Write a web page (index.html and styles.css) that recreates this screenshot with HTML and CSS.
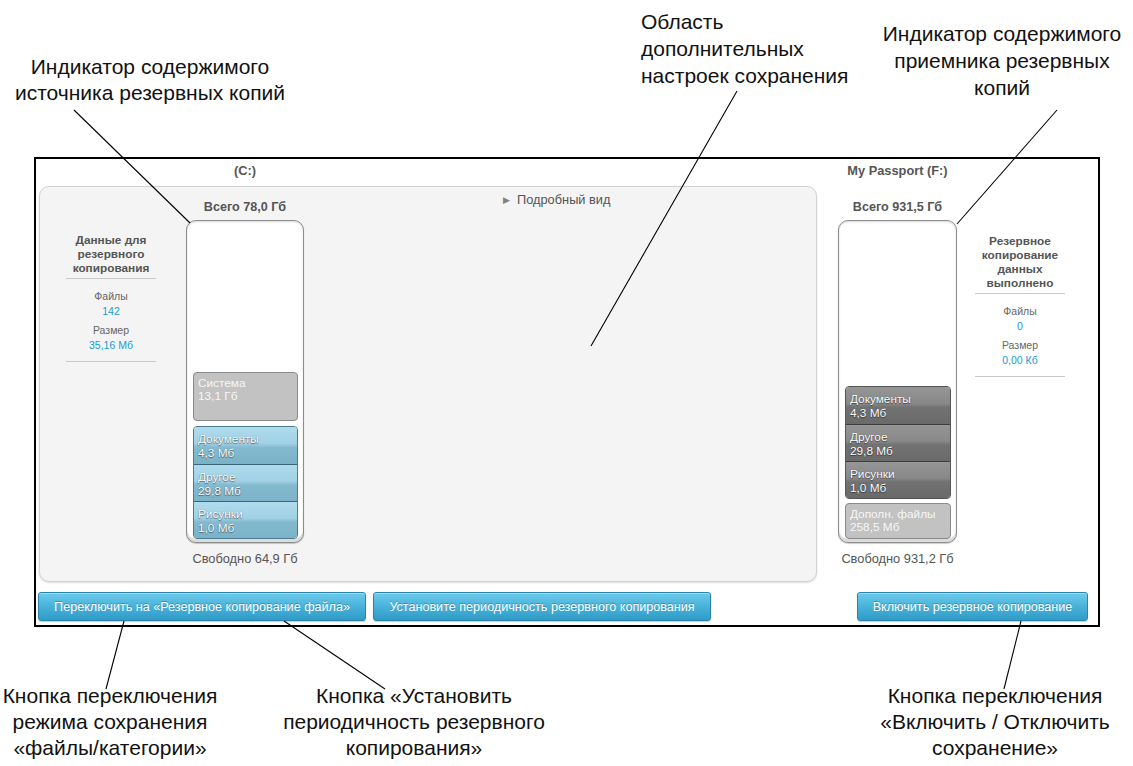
FILE: index.html
```html
<!DOCTYPE html>
<html lang="ru">
<head>
<meta charset="utf-8">
<title>Резервное копирование</title>
<link rel="stylesheet" href="styles.css">
</head>
<body>
<div class="figure">
  <div class="callout c-src">Индикатор содержимого<br>источника резервных копий</div>
  <div class="callout c-area">Область<br>дополнительных<br>настроек сохранения</div>
  <div class="callout c-dst">Индикатор содержимого<br>приемника резервных<br>копий</div>

  <div class="frame">
    <div class="heads">
      <div class="drive drive-src">(C:)</div>
      <div class="drive drive-dst">My Passport (F:)</div>
    </div>
    <div class="main">
      <div class="panel">
        <div class="info">
          <div class="info-title">Данные для<br>резервного<br>копирования</div>
          <div class="stats">
            <div class="stat-label">Файлы</div>
            <div class="stat-value">142</div>
            <div class="stat-label">Размер</div>
            <div class="stat-value">35,16 Мб</div>
          </div>
        </div>
        <div class="barcol">
          <div class="total">Всего 78,0 Гб</div>
          <div class="bar">
            <div class="seg seg-plain seg-sys">Система<br>13,1 Гб</div>
            <div class="group group-blue">
              <div class="seg">Документы<br>4,3 Мб</div>
              <div class="seg">Другое<br>29,8 Мб</div>
              <div class="seg">Рисунки<br>1,0 Мб</div>
            </div>
          </div>
          <div class="free">Свободно 64,9 Гб</div>
        </div>
        <div class="detail"><span class="tri">&#9654;</span>Подробный вид</div>
      </div>
      <div class="dest">
        <div class="barcol barcol-dst">
          <div class="total">Всего 931,5 Гб</div>
          <div class="bar">
            <div class="group group-dark">
              <div class="seg">Документы<br>4,3 Мб</div>
              <div class="seg">Другое<br>29,8 Мб</div>
              <div class="seg">Рисунки<br>1,0 Мб</div>
            </div>
            <div class="seg seg-plain seg-extra">Дополн. файлы<br>258,5 Мб</div>
          </div>
          <div class="free">Свободно 931,2 Гб</div>
        </div>
        <div class="info info-dst">
          <div class="info-title">Резервное<br>копирование<br>данных<br>выполнено</div>
          <div class="stats">
            <div class="stat-label">Файлы</div>
            <div class="stat-value">0</div>
            <div class="stat-label">Размер</div>
            <div class="stat-value">0,00 Кб</div>
          </div>
        </div>
      </div>
    </div>
    <div class="actions">
      <button class="btn btn-mode">Переключить на «Резервное копирование файла»</button>
      <button class="btn btn-sched">Установите периодичность резервного копирования</button>
      <button class="btn btn-toggle">Включить резервное копирование</button>
    </div>
  </div>

  <div class="callout b-left">Кнопка переключения<br>режима сохранения<br>«файлы/категории»</div>
  <div class="callout b-mid">Кнопка «Установить<br>периодичность резервного<br>копирования»</div>
  <div class="callout b-right">Кнопка переключения<br>«Включить / Отключить<br>сохранение»</div>

  <svg class="leaders" width="1133" height="766" viewBox="0 0 1133 766">
    <line x1="74" y1="110" x2="190" y2="223"/>
    <line x1="737" y1="91" x2="591" y2="346"/>
    <line x1="1057" y1="110" x2="957" y2="224"/>
    <line x1="124" y1="621" x2="106" y2="689"/>
    <line x1="284" y1="621" x2="385" y2="689"/>
    <line x1="1021" y1="621" x2="1004" y2="689"/>
  </svg>
</div>
</body>
</html>
```

FILE: styles.css
```css
html, body {
  margin: 0;
  background: #fff;
}

body {
  font-family: "Liberation Sans", Arial, sans-serif;
}

.figure {
  position: relative;
  width: 1133px;
  height: 766px;
  padding-top: 157px;
  box-sizing: border-box;
  overflow: hidden;
}

/* ---------- callouts ---------- */
.callout {
  position: absolute;
  font-size: 21px;
  line-height: 26px;
  color: #111;
  text-align: center;
  white-space: nowrap;
}

.c-src { left: 0; width: 300px; top: 54px; }
.c-area { left: 641px; top: 8px; text-align: left; line-height: 27px; }
.c-dst { left: 872px; width: 260px; top: 20px; line-height: 27px; }
.b-left { left: 0; width: 220px; top: 683px; }
.b-mid { left: 264px; width: 300px; top: 683px; }
.b-right { left: 865px; width: 260px; top: 683px; }

.leaders {
  position: absolute;
  left: 0;
  top: 0;
  pointer-events: none;
}

.leaders line {
  stroke: #000;
  stroke-width: 1.1;
}

/* ---------- screenshot frame ---------- */
.frame {
  margin-left: 34px;
  width: 1066px;
  height: 470px;
  box-sizing: border-box;
  border: 2px solid #000;
  background: #fff;
  display: flex;
  flex-direction: column;
}

.heads {
  display: flex;
  height: 27px;
  flex: none;
  font-size: 12.8px;
  font-weight: bold;
  color: #555;
}

.drive {
  width: 118px;
  padding-top: 5px;
  line-height: 13px;
  text-align: center;
  white-space: nowrap;
}

.drive-src { margin-left: 150px; }
.drive-dst { margin-left: 534px; width: 119px; }

.main {
  display: flex;
  height: 396px;
  flex: none;
}

.panel {
  margin-left: 3px;
  width: 778px;
  box-sizing: border-box;
  border: 1px solid #d2d2d2;
  border-radius: 10px;
  background: #f4f4f4;
  box-shadow: 0 1px 2px rgba(0, 0, 0, 0.14);
  display: flex;
  align-items: flex-start;
}

.dest {
  width: 281px;
  display: flex;
  align-items: flex-start;
}

/* ---------- info columns ---------- */
.info {
  width: 90px;
  margin-left: 26px;
  margin-top: 46px;
  text-align: center;
  color: #555;
}

.info-dst {
  margin-left: 18px;
  margin-top: 48px;
}

.info-title {
  font-size: 11.8px;
  font-weight: bold;
  line-height: 14px;
  padding-bottom: 3px;
  border-bottom: 1px solid #c9c9c9;
  white-space: nowrap;
}

.stats {
  padding: 10px 0 8px;
  border-bottom: 1px solid #c9c9c9;
  font-size: 10.5px;
}

.stat-label {
  line-height: 14px;
  color: #666;
}

.stat-value {
  line-height: 16px;
  color: #1b9ad5;
  margin-bottom: 4px;
}

.stat-value:last-child { margin-bottom: 0; }

/* ---------- bars ---------- */
.barcol {
  width: 118px;
  margin-left: 30px;
  display: flex;
  flex-direction: column;
  align-items: center;
  color: #555;
}

.barcol-dst {
  margin-left: 21px;
  width: 119px;
  margin-top: 1px;
}

.total {
  margin-top: 13px;
  font-size: 12.6px;
  font-weight: bold;
  line-height: 14px;
  white-space: nowrap;
}

.bar {
  margin-top: 6px;
  width: 100%;
  height: 323px;
  box-sizing: border-box;
  border: 1px solid #8d8d8d;
  border-radius: 10px;
  background: #fff;
  box-shadow: inset 0 -3px 0 #dcdcdc, inset 0 1px 2px rgba(0, 0, 0, 0.15), 0 1px 1px rgba(0, 0, 0, 0.2);
  display: flex;
  flex-direction: column;
  justify-content: flex-end;
  padding: 0 5px 3px 6px;
}

.free {
  margin-top: 9px;
  font-size: 12.8px;
  line-height: 14px;
  white-space: nowrap;
}

.seg {
  box-sizing: border-box;
  font-size: 11.8px;
  line-height: 14px;
  color: #fff;
  padding: 5px 0 0 4px;
  height: 37px;
  white-space: nowrap;
}

.seg-plain {
  border: 1px solid #8a8a8a;
  border-radius: 4px;
  background: #c2c2c2;
  color: #f6f6f6;
  line-height: 13px;
  padding-top: 4px;
}

.seg-sys {
  height: 49px;
  margin-bottom: 5px;
}

.seg-extra {
  height: 36px;
  margin-top: 4px;
}

.group {
  border-radius: 4px;
  overflow: hidden;
}

.group .seg {
  text-shadow: 0 1px 1px rgba(0, 0, 0, 0.45), 0 0 1px rgba(0, 0, 0, 0.4);
}

.group-blue {
  border: 1px solid #4a7c92;
}

.group-blue .seg {
  background: linear-gradient(to bottom, #afdbed 0%, #a0d1e5 45%, #84bad0 55%, #7cb2c8 100%);
}

.group-blue .seg + .seg {
  border-top: 1px solid #3c6678;
}

.group-dark {
  border: 1px solid #555;
}

.group-dark .seg {
  background: linear-gradient(to bottom, #969696 0%, #888 45%, #727272 55%, #6a6a6a 100%);
}

.group-dark .seg + .seg {
  border-top: 1px solid #3e3e3e;
}

/* ---------- detail toggle ---------- */
.detail {
  margin-left: 199px;
  margin-top: 6px;
  font-size: 12.8px;
  line-height: 14px;
  color: #555;
  white-space: nowrap;
}

.tri {
  font-size: 9px;
  color: #808080;
  margin-right: 7px;
  vertical-align: 1px;
}

/* ---------- buttons ---------- */
.actions {
  display: flex;
  gap: 7px;
  padding: 10px 10px 0 2px;
}

.btn {
  height: 29px;
  box-sizing: border-box;
  border: 1px solid #2a84aa;
  border-radius: 3px;
  background: linear-gradient(to bottom, #6dcbec 0%, #48b2da 50%, #2f9bc6 100%);
  box-shadow: inset 0 1px 0 rgba(255, 255, 255, 0.35), 0 1px 1px rgba(0, 0, 0, 0.2);
  color: #fff;
  font-family: "Liberation Sans", Arial, sans-serif;
  font-size: 12.6px;
  text-shadow: 0 -1px 0 rgba(0, 0, 0, 0.25);
  padding: 0;
  white-space: nowrap;
}

.btn-mode { width: 328px; }
.btn-sched { width: 338px; }
.btn-toggle { width: 231px; margin-left: auto; }
```
